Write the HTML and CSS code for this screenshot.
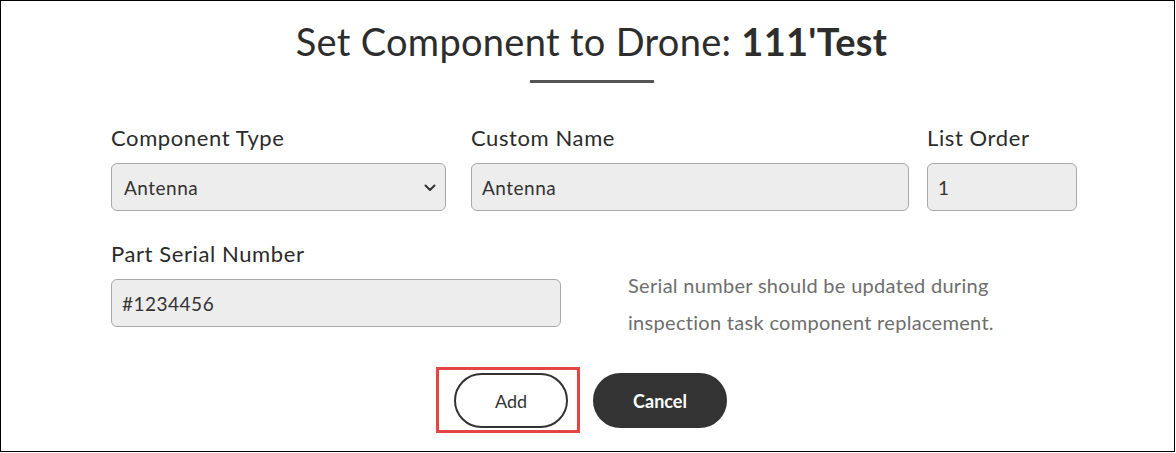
FILE: index.html
```html
<!DOCTYPE html>
<html lang="en">
<head>
<meta charset="utf-8">
<title>Set Component to Drone</title>
<link rel="stylesheet" href="styles.css">
</head>
<body>
<div class="modal">
  <h1 class="title">Set Component to Drone: <strong>111'Test</strong></h1>
  <div class="rule"></div>
  <form class="form">
    <div class="row row-top">
      <div class="field f-type">
        <label class="label" for="ctype">Component Type</label>
        <div class="select-wrap">
          <select id="ctype" class="control select">
            <option>Antenna</option>
          </select>
          <svg class="chevron" width="12" height="8" viewBox="0 0 12 8"><path d="M1.5 1.5 L6 6 L10.5 1.5" fill="none" stroke="#333" stroke-width="2" stroke-linecap="round" stroke-linejoin="round"/></svg>
        </div>
      </div>
      <div class="field f-name">
        <label class="label" for="cname">Custom Name</label>
        <input id="cname" class="control" type="text" value="Antenna">
      </div>
      <div class="field f-order">
        <label class="label" for="corder">List Order</label>
        <input id="corder" class="control" type="text" value="1">
      </div>
    </div>
    <div class="row row-serial">
      <div class="field f-serial">
        <label class="label" for="cserial">Part Serial Number</label>
        <input id="cserial" class="control" type="text" value="#1234456">
      </div>
      <p class="hint">Serial number should be updated during<br>inspection task component replacement.</p>
    </div>
    <div class="actions">
      <span class="highlight"><button type="button" class="btn btn-outline">Add</button></span>
      <button type="button" class="btn btn-dark">Cancel</button>
    </div>
  </form>
</div>
</body>
</html>
```

FILE: styles.css
```css
* { box-sizing: border-box; }
html, body { margin: 0; padding: 0; background: #fff; }
body { font-family: Lato, "Noto Sans", sans-serif; color: #333; }

.modal {
  width: 1175px;
  height: 452px;
  border: 1px solid #000;
  background: #fff;
  padding-top: 16px;
}

.title {
  margin: 0;
  text-align: center;
  font-size: 38px;
  font-weight: 400;
  line-height: 48px;
  letter-spacing: 0.3px;
  color: #2d2d2d;
  padding-left: 8px;
}
.title strong { font-weight: 700; }

.rule {
  width: 124px;
  height: 3px;
  background: #555;
  margin: 15px auto 0 529px;
}

.form { padding: 0 0 0 110px; margin-top: 44px; }

.row { display: flex; }
.field { display: flex; flex-direction: column; }
.f-type { width: 335px; }
.f-name { width: 438px; margin-left: 25px; }
.f-order { width: 150px; margin-left: 18px; }
.f-serial { width: 450px; }
.row-serial { margin-top: 32px; }

.label {
  font-size: 22px;
  line-height: 24px;
  letter-spacing: 0.6px;
  color: #2b2b2b;
  margin-bottom: 12px;
  position: relative;
  top: -1px;
}

.control {
  height: 48px;
  width: 100%;
  border: 1px solid #a8a8a8;
  border-radius: 6px;
  background: #ededed;
  font-family: Lato, "Noto Sans", sans-serif;
  font-size: 19px;
  letter-spacing: 0.5px;
  color: #333;
  padding: 0 10px;
  outline: none;
  margin: 0;
}

.select-wrap { position: relative; }
.select {
  -webkit-appearance: none;
  appearance: none;
  padding-left: 12px;
}
.chevron {
  position: absolute;
  right: 10px;
  top: 21px;
  pointer-events: none;
}

.hint {
  margin: 24px 0 0 67px;
  font-size: 20px;
  line-height: 37px;
  letter-spacing: 0.3px;
  color: #6e6e6e;
}

.actions {
  display: flex;
  justify-content: center;
  gap: 25px;
  margin-top: 32px;
  padding-right: 104px;
}

.highlight { position: relative; display: inline-flex; }
.highlight::after {
  content: "";
  position: absolute;
  left: -18px;
  right: -12px;
  top: -6px;
  bottom: -5px;
  border: 3px solid #e54545;
  pointer-events: none;
}

.btn {
  height: 55px;
  border-radius: 28px;
  font-family: Lato, "Noto Sans", sans-serif;
  font-size: 18px;
  cursor: pointer;
  margin: 0;
}
.btn-outline {
  width: 114px;
  background: #fff;
  border: 2px solid #333;
  color: #333;
}
.btn-dark {
  width: 134px;
  background: #333;
  border: 2px solid #333;
  color: #fff;
  font-weight: 700;
}
```
